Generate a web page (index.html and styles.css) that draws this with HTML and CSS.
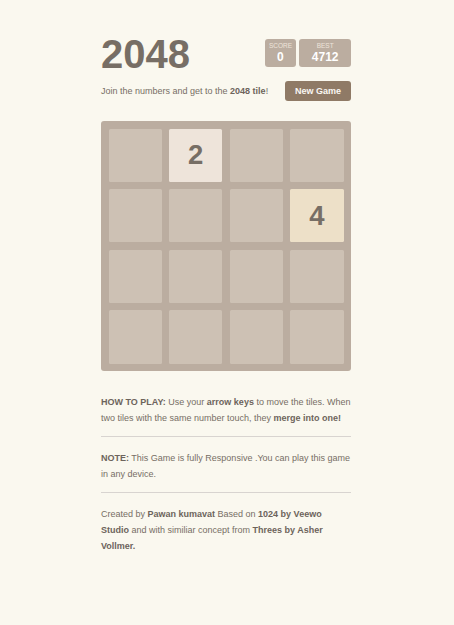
FILE: index.html
```html
<!DOCTYPE html>
<html lang="en">
<head>
<meta charset="utf-8">
<title>2048</title>
<link rel="stylesheet" href="styles.css">
</head>
<body>
<div class="container">
  <div class="heading">
    <h1 class="title">2048</h1>
    <div class="scores">
      <div class="score-box"><span class="score-label">SCORE</span><span class="score-value">0</span></div>
      <div class="score-box"><span class="score-label">BEST</span><span class="score-value">4712</span></div>
    </div>
  </div>
  <div class="above-game">
    <p class="intro">Join the numbers and get to the <strong>2048 tile</strong>!</p>
    <a class="restart-button">New Game</a>
  </div>
  <div class="grid">
    <div class="cell"></div>
    <div class="cell tile-2">2</div>
    <div class="cell"></div>
    <div class="cell"></div>
    <div class="cell"></div>
    <div class="cell"></div>
    <div class="cell"></div>
    <div class="cell tile-4">4</div>
    <div class="cell"></div>
    <div class="cell"></div>
    <div class="cell"></div>
    <div class="cell"></div>
    <div class="cell"></div>
    <div class="cell"></div>
    <div class="cell"></div>
    <div class="cell"></div>
  </div>
  <div class="explanation">
    <p><strong>HOW TO PLAY:</strong> Use your <strong>arrow keys</strong> to move the tiles. When two tiles with the same number touch, they <strong>merge into one!</strong></p>
    <hr>
    <p><strong>NOTE:</strong> This Game is fully Responsive .You can play this game in any device.</p>
    <hr>
    <p>Created by <strong>Pawan kumavat</strong> Based on <strong>1024 by Veewo Studio</strong> and with similiar concept from <strong>Threes by Asher Vollmer.</strong></p>
  </div>
</div>
</body>
</html>
```
FILE: styles.css
```css
html, body {
  margin: 0;
  padding: 0;
  background: #faf8ef;
}

body {
  color: #776e65;
  font-family: "Liberation Sans", Arial, sans-serif;
  font-size: 9px;
  padding: 34px 2px 0 0;
}

.container {
  width: 250px;
  margin: 0 auto;
}

.heading {
  display: flex;
  justify-content: space-between;
  align-items: flex-start;
}

.title {
  margin: 0;
  font-size: 40px;
  line-height: 40px;
  font-weight: bold;
  color: #776e65;
}

.scores {
  display: flex;
  gap: 3px;
  margin-top: 5px;
}

.score-box {
  display: flex;
  flex-direction: column;
  align-items: center;
  box-sizing: border-box;
  height: 27.5px;
  padding: 3.4px 12.5px 0;
  background: #bbada0;
  border-radius: 3px;
}

.score-label {
  display: flex;
  justify-content: center;
  width: 0;
  white-space: nowrap;
  font-size: 6.5px;
  line-height: 8px;
  color: #eee4da;
}

.score-value {
  font-size: 12px;
  line-height: 14px;
  font-weight: bold;
  color: #ffffff;
}

.above-game {
  display: flex;
  justify-content: space-between;
  align-items: center;
  margin-top: 7px;
}

.intro {
  margin: 0;
  line-height: 20px;
}

.intro strong {
  color: #6d645c;
}

.restart-button {
  display: block;
  height: 20px;
  line-height: 20px;
  padding: 0 10px;
  background: #8f7a66;
  color: #f9f6f2;
  font-weight: bold;
  border-radius: 3px;
}

.grid {
  margin-top: 20px;
  box-sizing: border-box;
  width: 250px;
  height: 250px;
  padding: 7.5px;
  background: #bbada0;
  border-radius: 3px;
  display: grid;
  grid-template-columns: repeat(4, 1fr);
  grid-template-rows: repeat(4, 1fr);
  gap: 7.5px;
}

.cell {
  background: #cdc1b4;
  border-radius: 1.5px;
  display: flex;
  align-items: center;
  justify-content: center;
  font-size: 27.5px;
  font-weight: bold;
  color: #776e65;
}

.tile-2 {
  background: #eee4da;
}

.tile-4 {
  background: #ede0c8;
}

.explanation {
  margin-top: 23px;
}

.explanation p {
  margin: 0;
  line-height: 16px;
}

.explanation strong {
  color: #6d645c;
}

.explanation hr {
  border: none;
  border-top: 1px solid #d8d4d0;
  margin: 10px 0 13px;
}
```
